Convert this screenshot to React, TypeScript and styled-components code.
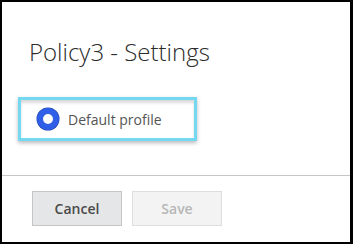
import React from "react";
import styled, { createGlobalStyle } from "styled-components";

const GlobalStyle = createGlobalStyle`
  html, body {
    margin: 0;
    padding: 0;
    background: #ffffff;
  }
  * {
    box-sizing: border-box;
  }
`;

const Dialog = styled.div`
  width: 353px;
  height: 244px;
  display: flex;
  flex-direction: column;
  background: #ffffff;
  border-style: solid;
  border-color: #000000;
  border-width: 2px 3px 2px 2px;
  font-family: "Open Sans", "Liberation Sans", sans-serif;
`;

const Body = styled.div`
  flex: 1;
  padding: 34px 0 0 16px;
`;

const Title = styled.h2`
  margin: 0 0 29px 11px;
  font-size: 24px;
  line-height: 32px;
  font-weight: 300;
  color: #2b2b2b;
`;

const Option = styled.label`
  display: flex;
  align-items: center;
  gap: 9px;
  width: 179px;
  height: 44px;
  padding-left: 16px;
  border: 3px solid #74d8f0;
  box-shadow: 0 2px 4px rgba(0, 0, 0, 0.28), inset 0 3px 3px rgba(0, 0, 0, 0.14);
  font-size: 14px;
  color: #555555;
`;

const Radio = styled.span<{ checked: boolean }>`
  width: 22px;
  height: 22px;
  border-radius: 50%;
  flex-shrink: 0;
  background: #ffffff;
  border: ${(props) => (props.checked ? "6px solid #2f5fe6" : "2px solid #999999")};
  box-shadow: 0 0 0 0.5px #1c3fa8;
`;

const Footer = styled.div`
  display: flex;
  gap: 10px;
  height: 67px;
  padding: 15px 0 0 30px;
  border-top: 1px solid #c6c6c6;
`;

const Button = styled.button<{ disabled?: boolean }>`
  width: 90px;
  height: 35px;
  font-family: "Open Sans", "Liberation Sans", sans-serif;
  font-size: 14px;
  font-weight: 600;
  border: 1px solid ${(props) => (props.disabled ? "#dddddd" : "#c5c5c5")};
  background: ${(props) => (props.disabled ? "#f3f3f3" : "#e5e6e7")};
  color: ${(props) => (props.disabled ? "#b7b7b7" : "#4a4a4a")};
  padding: 0;
`;

export default function App() {
  return (
    <>
      <GlobalStyle />
      <Dialog>
        <Body>
          <Title>Policy3 - Settings</Title>
          <Option>
            <Radio checked />
            Default profile
          </Option>
        </Body>
        <Footer>
          <Button>Cancel</Button>
          <Button disabled>Save</Button>
        </Footer>
      </Dialog>
    </>
  );
}
